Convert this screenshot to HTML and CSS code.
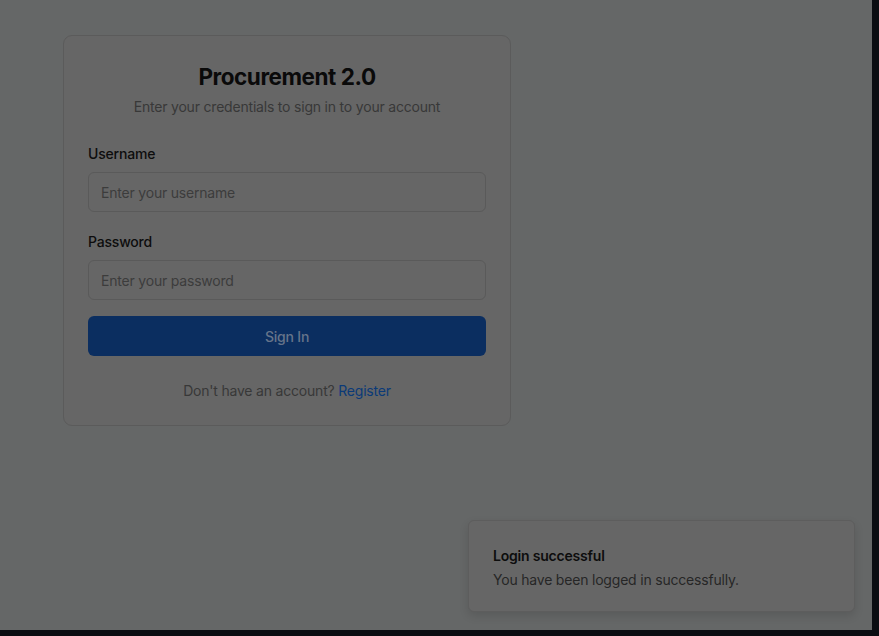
FILE: index.html
```html
<!DOCTYPE html>
<html lang="en">
<head>
<meta charset="utf-8">
<title>Procurement 2.0 – Sign In</title>
<link rel="stylesheet" href="styles.css">
</head>
<body>
<div class="viewport">
  <main class="page">
    <section class="card">
      <header class="card-head">
        <h1 class="title">Procurement 2.0</h1>
        <p class="subtitle">Enter your credentials to sign in to your account</p>
      </header>
      <form class="form">
        <div class="field">
          <label class="label" for="username">Username</label>
          <input class="input" id="username" type="text" placeholder="Enter your username">
        </div>
        <div class="field">
          <label class="label" for="password">Password</label>
          <input class="input" id="password" type="password" placeholder="Enter your password">
        </div>
        <button class="btn" type="button">Sign In</button>
      </form>
      <p class="foot">Don't have an account? <a class="link" href="#">Register</a></p>
    </section>
  </main>
  <div class="toast">
    <div class="toast-title">Login successful</div>
    <div class="toast-desc">You have been logged in successfully.</div>
  </div>
</div>
</body>
</html>
```
FILE: styles.css
```css
* { box-sizing: border-box; }
html, body { margin: 0; padding: 0; }
body {
  background: #0b0d12;
  font-family: Inter, "Noto Sans", "Liberation Sans", sans-serif;
  letter-spacing: -0.2px;
  width: 879px;
  height: 636px;
  overflow: hidden;
}
.viewport {
  position: relative;
  width: 872px;
  height: 630px;
  background: #656767;
}
.page {
  padding: 35px 0 0 63px;
}
.card {
  width: 448px;
  background: #666666;
  border: 1px solid #5b5b5b;
  border-radius: 9px;
  padding: 25px 24px 24px;
}
.card-head {
  text-align: center;
  margin-bottom: 27px;
}
.title {
  margin: 0;
  font-size: 22.5px;
  line-height: 32px;
  font-weight: 700;
  letter-spacing: -0.02em;
  color: #0a0a0a;
}
.subtitle {
  margin: 4px 0 0;
  font-size: 14px;
  line-height: 20px;
  color: #383838;
}
.form {
  display: flex;
  flex-direction: column;
  gap: 20px;
}
.field {
  display: flex;
  flex-direction: column;
  gap: 8px;
}
.label {
  font-size: 14px;
  line-height: 20px;
  font-weight: 500;
  color: #0d0d0d;
}
.input {
  height: 40px;
  width: 100%;
  border: 1px solid #5a5a5a;
  border-radius: 6px;
  background: #666666;
  padding: 0 12px;
  font: inherit;
  font-size: 14px;
  letter-spacing: -0.2px;
  color: #111;
  outline: none;
}
.input::placeholder { color: #3c3c3c; }
.btn {
  margin-top: -4px;
  height: 40px;
  width: 100%;
  border: 0;
  border-radius: 6px;
  background: #0b2e60;
  color: #66748a;
  font: inherit;
  font-size: 14px;
  letter-spacing: -0.2px;
  font-weight: 500;
}
.foot {
  margin: 25px 0 0;
  text-align: center;
  font-size: 14px;
  line-height: 20px;
  color: #383838;
}
.link { color: #0b3a78; text-decoration: none; }
.toast {
  position: absolute;
  right: 17px;
  bottom: 18px;
  width: 387px;
  height: 92px;
  background: #666666;
  border: 1px solid #5d5d5d;
  border-radius: 6px;
  box-shadow: 0 4px 10px rgba(0,0,0,0.12);
  padding: 25px 24px;
}
.toast-title {
  font-size: 14px;
  line-height: 20px;
  font-weight: 600;
  color: #0d0d0d;
}
.toast-desc {
  margin-top: 4px;
  font-size: 14px;
  line-height: 20px;
  color: #262626;
}
```
